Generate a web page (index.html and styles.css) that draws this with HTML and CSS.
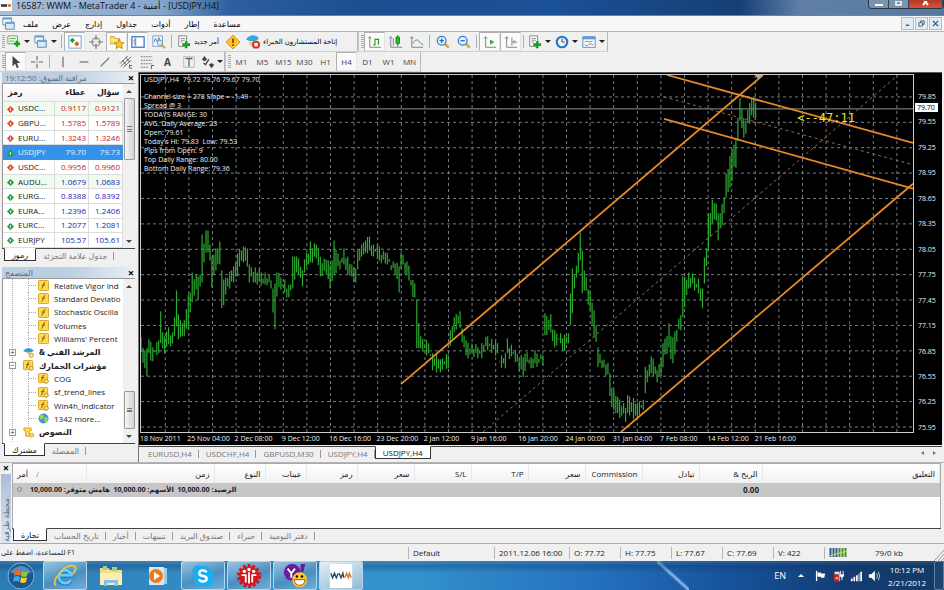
FILE: index.html
```html
<!DOCTYPE html>
<html lang="ar">
<head>
    <meta charset="UTF-8">
    <title>16587: WWM - MetaTrader 4</title>
    <link rel="stylesheet" href="styles.css">
</head>
<body>
<svg class="defs" aria-hidden="true">
    <symbol id="down" viewBox="0 0 8 8"><path d="M4 0L8 4L4 8L0 4Z" fill="#d8431f"/><path d="M4 2v3M2.500 4L4 5.500L5.500 4" stroke="#ffd9c8" fill="none"/></symbol>
    <symbol id="up" viewBox="0 0 8 8"><path d="M4 0L8 4L4 8L0 4Z" fill="#18963a"/><path d="M4 6V3M2.500 4L4 2.500L5.500 4" stroke="#c9f5cf" fill="none"/></symbol>
    <symbol id="func" viewBox="0 0 12 12"><rect x=".5" y=".5" width="11" height="11" rx="1" fill="#ffd94f" stroke="#d5a021"/><path d="M8 3Q6.500 2.200 6 5T4 9.500M4.200 5.500h3.500" stroke="#7a5200" fill="none"/></symbol>
    <symbol id="func2" viewBox="0 0 12 12"><rect x=".5" y=".5" width="10" height="10" rx="1" fill="#ffd94f" stroke="#d5a021"/><path d="M7 2.500Q5.500 2 5 5T3.500 9M3.500 5h3.500" stroke="#7a5200" fill="none"/><circle cx="9" cy="9" r="2.200" fill="#ffe680" stroke="#b98a10"/></symbol>
    <symbol id="hat" viewBox="0 0 12 12"><path d="M0 4Q6-2 12 4Q6 8 0 4Z" fill="#2f9fd0"/><path d="M3 5Q6 10 8 6" fill="#e8b98a"/><circle cx="9" cy="9" r="2.300" fill="#ffe680" stroke="#c79518"/></symbol>
    <symbol id="globe" viewBox="0 0 12 12"><circle cx="6" cy="6" r="5.500" fill="#3b9ad6"/><path d="M2 3Q5 0 6 3T4 7Q1 7 2 3M7 5Q11 3 10.500 7T7 10Z" fill="#9bd84a"/></symbol>
    <symbol id="script" viewBox="0 0 12 12"><path d="M1 1h8v3H7v4h2v2H3V4H1Z" fill="#ffd94f" stroke="#d5a021"/><circle cx="9.500" cy="9" r="2" fill="#ffe680" stroke="#c79518"/></symbol>
    <symbol id="newchart" viewBox="0 0 16 16"><path d="M1 1h11v9H1Z" fill="#eaf7ea" stroke="#6a9a6a"/><path d="M3 4h7M3 7h5" stroke="#58a058"/><path d="M8 10h7M11.500 6.500v7" stroke="#15a31c" stroke-width="3"/></symbol>
    <symbol id="windows" viewBox="0 0 16 16"><path d="M1 1h10v8H1Z" fill="#fff" stroke="#4a82b8"/><path d="M1 2h10" stroke="#6ea6da" stroke-width="2"/><path d="M4 6h10v8H4Z" fill="#dceaf8" stroke="#4a82b8"/><path d="M4 7h10" stroke="#6ea6da" stroke-width="2"/></symbol>
    <symbol id="watch" viewBox="0 0 16 16"><rect x="1" y="1" width="14" height="14" fill="#fff" stroke="#5c9bd0"/><path d="M5 3l3 3l-3 3l-3-3Z" fill="#25a025"/><path d="M10 7l3 3l-3 3l-3-3Z" fill="#d86020"/></symbol>
    <symbol id="cross" viewBox="0 0 16 16"><circle cx="8" cy="8" r="4.500" fill="none" stroke="#777" stroke-width="1.200"/><path d="M8 0v6M8 10v6M0 8h6M10 8h6" stroke="#777" stroke-width="1.200"/></symbol>
    <symbol id="star" viewBox="0 0 16 16"><path d="M0 2h5l1 2h5v6H0Z" fill="#ffe27a" stroke="#c99a18"/><path d="M10.500 5l1.700 3.500l3.800.5l-2.700 2.500l.7 4l-3.500-2l-3.500 2l.7-4L5 9l3.800-.5Z" fill="#ffc820" stroke="#b98510"/></symbol>
    <symbol id="panel" viewBox="0 0 16 16"><rect x="1" y="2" width="14" height="12" fill="#fff" stroke="#3f7fbf" stroke-width="1.500"/><path d="M5 3v10" stroke="#6ea6da" stroke-width="2"/><path d="M3 6h1M3 9h1" stroke="#222"/></symbol>
    <symbol id="tester" viewBox="0 0 16 16"><rect x="1" y="1" width="11" height="12" fill="#eef5fc" stroke="#7f9fbf"/><path d="M2 8l2-4l2 4l2-5l2 5" fill="none" stroke="#5577aa"/><circle cx="9" cy="9" r="3" fill="#d5ebff" stroke="#6b93bb"/><path d="M11 11l4 4" stroke="#d99c34" stroke-width="2"/></symbol>
    <symbol id="order" viewBox="0 0 16 16"><path d="M2 1h9v12H2Z" fill="#fff" stroke="#777"/><path d="M4 4h5M4 6h5M4 8h3" stroke="#888"/><path d="M6 11h9M10.500 7v8" stroke="#15a31c" stroke-width="3"/></symbol>
    <symbol id="warn" viewBox="0 0 16 16"><path d="M8 0l8 8l-8 8l-8-8Z" fill="#ffc529" stroke="#cf8f12"/><path d="M8 4v5M8 10.500v2" stroke="#7a4b00" stroke-width="2"/></symbol>
    <symbol id="expert" viewBox="0 0 16 16"><path d="M0 5Q7-4 15 4Q8 10 0 5Z" fill="#3aa6d8"/><path d="M3 8Q5 14 9 13V8Z" fill="#f0c084"/><circle cx="11.500" cy="11" r="4.500" fill="#d92b1e"/><rect x="9.500" y="9" width="4" height="4" fill="#fff"/></symbol>
    <symbol id="bars" viewBox="0 0 16 16"><path d="M2 2v12h13M0 4l2-2l2 2" fill="none" stroke="#777"/><path d="M8 4v8M6 11h2M8 5h4M12 4v7" fill="none" stroke="#2a9a2a" stroke-width="1.300"/></symbol>
    <symbol id="candle" viewBox="0 0 16 16"><path d="M2 2v12h13M0 4l2-2l2 2M5 4v8" fill="none" stroke="#777"/><path d="M10 0v13" stroke="#157a15"/><rect x="8" y="2" width="4" height="8" rx="1" fill="#2cb92c" stroke="#157a15"/></symbol>
    <symbol id="line" viewBox="0 0 16 16"><path d="M2 2v12h13M0 4l2-2l2 2" fill="none" stroke="#777"/><path d="M3 10Q7 3 10 7T15 11" fill="none" stroke="#3a9a3a"/></symbol>
    <symbol id="zoomin" viewBox="0 0 16 16"><path d="M9.500 9.500l5 5" stroke="#d7a53c" stroke-width="3"/><circle cx="6.500" cy="6.500" r="5" fill="#e4f2ff" stroke="#3a80c8" stroke-width="1.500"/><path d="M4 6.500h5M6.500 4v5" stroke="#2a6fbe" stroke-width="1.500"/></symbol>
    <symbol id="zoomout" viewBox="0 0 16 16"><path d="M9.500 9.500l5 5" stroke="#d7a53c" stroke-width="3"/><circle cx="6.500" cy="6.500" r="5" fill="#e4f2ff" stroke="#3a80c8" stroke-width="1.500"/><path d="M4 6.500h5" stroke="#2a6fbe" stroke-width="1.500"/></symbol>
    <symbol id="scroll" viewBox="0 0 16 16"><path d="M3 2v12h12M1 4l2-2l2 2" fill="none" stroke="#777"/><path d="M8 5l5 3l-5 3Z" fill="#35b035"/></symbol>
    <symbol id="shift" viewBox="0 0 16 16"><path d="M3 2v12h12M1 4l2-2l2 2M9 3v9M15 8h-5M12 6l-2 2l2 2" fill="none" stroke="#777"/></symbol>
    <symbol id="clock" viewBox="0 0 16 16"><circle cx="8" cy="8" r="6" fill="#e6f2ff" stroke="#2f74c0" stroke-width="2.500"/><path d="M8 4v4h3" fill="none" stroke="#333"/></symbol>
    <symbol id="template" viewBox="0 0 16 16"><rect x="1" y="2" width="14" height="12" fill="#fff" stroke="#4a82b8"/><path d="M1 3.500h14" stroke="#5c9bd8" stroke-width="3"/><path d="M3 8l3-1l2 1l4-1M3 11l3 1l3-2l4 1" fill="none" stroke="#777"/></symbol>
    <symbol id="pointer" viewBox="0 0 16 16"><path d="M4 1v12l3-3l2 5l2-1l-2-5h4Z" fill="#444"/></symbol>
    <symbol id="plus" viewBox="0 0 16 16"><path d="M8 1v5M8 10v5M1 8h5M10 8h5M8 7.500v1" stroke="#666" stroke-width="1.200"/></symbol>
    <symbol id="vert" viewBox="0 0 16 16"><path d="M8 2v12" stroke="#666" stroke-width="1.300"/></symbol>
    <symbol id="horz" viewBox="0 0 16 16"><path d="M3 8h10" stroke="#666" stroke-width="1.300"/></symbol>
    <symbol id="diag" viewBox="0 0 16 16"><path d="M3 13L13 3" stroke="#666" stroke-width="1.300"/></symbol>
    <symbol id="channel" viewBox="0 0 16 16"><path d="M1 10L10 1M2 13L14 2M5 14L14 6M4 6l4 5M8 3l4 5M12 12h3M12 15h3M12 11v4" stroke="#555"/></symbol>
    <symbol id="fibo" viewBox="0 0 16 16"><path d="M1 2h13M1 6h13M1 10h13M1 14h9" stroke="#666" stroke-dasharray="2 1"/><path d="M13 16v-4h3" fill="none" stroke="#444"/></symbol>
    <symbol id="label" viewBox="0 0 16 16"><rect x="2" y="2" width="12" height="12" fill="none" stroke="#777" stroke-dasharray="1 1"/><path d="M4 4h8M8 4v9" stroke="#666" stroke-width="1.500"/></symbol>
    <symbol id="arrows" viewBox="0 0 16 16"><path d="M1 5l3-4l3 4l-3 2ZM9 11l3-2l3 2l-3 4Z" fill="#444"/><path d="M3 9l2 2l4-6" fill="none" stroke="#444" stroke-width="1.500"/></symbol>
</svg>

<header class="titlebar">
    <svg class="logo" viewBox="0 0 12 11"><path fill="#fff" d="M0 0h12v11H0Z"/><path d="M1 4l1 3l1-3l1 3l1-3l1 3l1-3" fill="none" stroke="#333"/><path d="M8 7l1-3l1 3l1-3" fill="none" stroke="#e07020"/></svg>
    <h1>16587: WWM - MetaTrader 4 - أمنية - [USDJPY,H4]</h1>
    <div class="winbtns">
        <button aria-label="minimize"><svg viewBox="0 0 8 6"><path d="M0 3h8v2H0Z" fill="#fff"/></svg></button>
        <button aria-label="maximize"><svg viewBox="0 0 8 6"><path d="M1 0h5v4H1Z" fill="none" stroke="#fff" stroke-width="1.500"/></svg></button>
        <button class="close" aria-label="close"><svg viewBox="0 0 8 6"><path d="M1-2l5 6M6-2L1 4" stroke="#fff" stroke-width="2"/></svg></button>
    </div>
</header>

<nav class="menubar">
    <svg class="ic" viewBox="0 0 16 16"><use href="#windows"/></svg>
    <button>ملف</button>
    <button>عرض</button>
    <button>إدارج</button>
    <button>جداول</button>
    <button>أدوات</button>
    <button>إطار</button>
    <button>مساعدة</button>
    <div class="mdibtns">
        <button aria-label="minimize child"><svg viewBox="0 0 8 8"><path d="M2 6h4" stroke="#456" stroke-width="1.500"/></svg></button>
        <button aria-label="restore child"><svg viewBox="0 0 8 8"><path d="M1 3h4v4H1ZM3 3V1h4v4H5" fill="none" stroke="#456"/></svg></button>
        <button aria-label="close child"><svg viewBox="0 0 8 8"><path d="M1 1l6 6M7 1L1 7" stroke="#456" stroke-width="1.500"/></svg></button>
    </div>
</nav>

<div class="toolbar">
    <div class="group">
        <i class="grip"></i>
        <button class="drop" aria-label="new chart"><svg class="ic"><use href="#newchart"/></svg></button>
        <button class="drop" aria-label="profiles"><svg class="ic"><use href="#windows"/></svg></button>
        <i class="sep"></i>
        <button class="on" aria-label="market watch"><svg class="ic"><use href="#watch"/></svg></button>
        <button aria-label="data window"><svg class="ic"><use href="#cross"/></svg></button>
        <button class="on" aria-label="navigator"><svg class="ic"><use href="#star"/></svg></button>
        <button class="on" aria-label="terminal"><svg class="ic"><use href="#panel"/></svg></button>
        <button aria-label="tester"><svg class="ic"><use href="#tester"/></svg></button>
        <i class="sep"></i>
        <button class="text"><svg class="ic"><use href="#order"/></svg>أمر جديد</button>
        <button aria-label="metaeditor"><svg class="ic"><use href="#warn"/></svg></button>
        <button class="text experts"><svg class="ic"><use href="#expert"/></svg>إتاحة المستشارون الخبراء</button>
    </div>
    <div class="group">
        <i class="grip"></i>
        <button class="on" aria-label="bar chart"><svg class="ic"><use href="#bars"/></svg></button>
        <button aria-label="candlesticks"><svg class="ic"><use href="#candle"/></svg></button>
        <button aria-label="line chart"><svg class="ic"><use href="#line"/></svg></button>
        <i class="sep"></i>
        <button aria-label="zoom in"><svg class="ic"><use href="#zoomin"/></svg></button>
        <button aria-label="zoom out"><svg class="ic"><use href="#zoomout"/></svg></button>
        <i class="sep"></i>
        <button class="on" aria-label="auto scroll"><svg class="ic"><use href="#scroll"/></svg></button>
        <button class="on" aria-label="chart shift"><svg class="ic"><use href="#shift"/></svg></button>
        <i class="sep"></i>
        <button class="drop" aria-label="indicators"><svg class="ic"><use href="#order"/></svg></button>
        <button class="drop" aria-label="periods"><svg class="ic"><use href="#clock"/></svg></button>
        <button class="drop" aria-label="templates"><svg class="ic"><use href="#template"/></svg></button>
    </div>
</div>

<div class="toolbar tools">
    <div class="group">
        <i class="grip"></i>
        <button class="on" aria-label="cursor"><svg class="ic"><use href="#pointer"/></svg></button>
        <button aria-label="crosshair"><svg class="ic"><use href="#plus"/></svg></button>
        <i class="sep"></i>
        <button aria-label="vertical line"><svg class="ic"><use href="#vert"/></svg></button>
        <button aria-label="horizontal line"><svg class="ic"><use href="#horz"/></svg></button>
        <button aria-label="trendline"><svg class="ic"><use href="#diag"/></svg></button>
        <button aria-label="channel"><svg class="ic"><use href="#channel"/></svg></button>
        <button aria-label="fibonacci"><svg class="ic"><use href="#fibo"/></svg></button>
        <button class="letter">A</button>
        <button aria-label="text label"><svg class="ic"><use href="#label"/></svg></button>
        <button class="drop" aria-label="arrows"><svg class="ic"><use href="#arrows"/></svg></button>
    </div>
    <div class="group">
        <i class="grip"></i>
        <button>M1</button>
        <button>M5</button>
        <button>M15</button>
        <button>M30</button>
        <button>H1</button>
        <button class="on">H4</button>
        <button>D1</button>
        <button>W1</button>
        <button>MN</button>
    </div>
</div>

<main class="main">
    <aside class="side">
        <section class="panel">
            <div class="ptitle"><h2>مراقبة السوق: 19:12:50</h2><button aria-label="close">×</button></div>
            <div class="pbody">
                <table class="watch">
                    <thead>
                        <tr><th class="sym">رمز</th><th>عطاء</th><th>سؤال</th></tr>
                    </thead>
                    <tbody>
                        <tr class="red alt"><td><svg><use href="#down"/></svg>USDC...</td><td>0.9117</td><td>0.9121</td></tr>
                        <tr class="red"><td><svg><use href="#down"/></svg>GBPU...</td><td>1.5785</td><td>1.5789</td></tr>
                        <tr class="red"><td><svg><use href="#down"/></svg>EURU...</td><td>1.3243</td><td>1.3246</td></tr>
                        <tr class="sel"><td><svg><use href="#up"/></svg>USDJPY</td><td>79.70</td><td>79.73</td></tr>
                        <tr class="red"><td><svg><use href="#down"/></svg>USDC...</td><td>0.9956</td><td>0.9960</td></tr>
                        <tr class="alt"><td><svg><use href="#up"/></svg>AUDU...</td><td>1.0679</td><td>1.0683</td></tr>
                        <tr><td><svg><use href="#up"/></svg>EURG...</td><td>0.8388</td><td>0.8392</td></tr>
                        <tr><td><svg><use href="#up"/></svg>EURA...</td><td>1.2396</td><td>1.2406</td></tr>
                        <tr><td><svg><use href="#up"/></svg>EURC...</td><td>1.2077</td><td>1.2081</td></tr>
                        <tr><td><svg><use href="#up"/></svg>EURJPY</td><td>105.57</td><td>105.61</td></tr>
                    </tbody>
                </table>
                <div class="scroll"><i class="thumb"></i></div>
            </div>
            <div class="tabs"><button class="active">رموز</button><button>جدول علامة التجزئة</button></div>
        </section>
        <section class="panel">
            <div class="ptitle"><h2>المتصفح</h2><button aria-label="close">×</button></div>
            <div class="pbody">
                <ul class="tree">
                    <li class="leaf"><svg><use href="#func"/></svg>Relative Vigor Ind</li>
                    <li class="leaf"><svg><use href="#func"/></svg>Standard Deviatio</li>
                    <li class="leaf"><svg><use href="#func"/></svg>Stochastic Oscilla</li>
                    <li class="leaf"><svg><use href="#func"/></svg>Volumes</li>
                    <li class="leaf end"><svg><use href="#func"/></svg>Williams' Percent</li>
                    <li class="node"><i>+</i><svg><use href="#hat"/></svg>&amp; المرشد الفني</li>
                    <li class="node"><i>−</i><svg><use href="#func2"/></svg>مؤشرات الجمارك</li>
                    <li class="leaf"><svg><use href="#func2"/></svg>COG</li>
                    <li class="leaf"><svg><use href="#func2"/></svg>sf_trend_lines</li>
                    <li class="leaf"><svg><use href="#func2"/></svg>Win4h_Indicator</li>
                    <li class="leaf end"><svg><use href="#globe"/></svg>1342 more...</li>
                    <li class="node"><i>+</i><svg><use href="#script"/></svg>النصوص</li>
                </ul>
                <div class="scroll low"><i class="thumb"></i></div>
            </div>
            <div class="tabs"><button class="active">مشترك</button><button>المفضلة</button></div>
        </section>
    </aside>

    <section class="work">
        <div class="chart">
            <div class="plot">
                <svg id="plot" viewBox="0 0 772 358" preserveAspectRatio="none">
                    <g id="grid"></g>
                    <path class="now" d="M0 34H772"/>
                    <path id="bars-h4"/>
                    <path class="mid" d="M342 358L757 0M523 22L772 90"/>
                    <path class="trend" d="M260 310L622 0M480 358L772 109M526 0L772 68M523 44L772 114"/>
                    <path class="mark" d="M614 0h8l-5 4Z"/>
                </svg>
                <div class="info">
                    <p class="head">USDJPY,H4&nbsp; 79.72 79.76 79.67 79.70</p>
                    <p>Channel size = 278 Slope = -1.49</p>
                    <p>Spread @ 3</p>
                    <p>TODAYS RANGE: 30</p>
                    <p>AVG. Daily Average: 23</p>
                    <p>Open: 79.61</p>
                    <p>Today's Hi: 79.83&nbsp; Low: 79.53</p>
                    <p>Pips from Open: 9</p>
                    <p>Top Daily Range: 80.00</p>
                    <p>Bottom Daily Range: 79.36</p>
                </div>
                <div class="countdown">&lt;--47:11</div>
            </div>
            <div class="prices">
                <span>79.85</span><span>79.55</span><span>79.25</span><span>78.95</span><span>78.65</span><span>78.35</span><span>78.05</span>
                <span>77.75</span><span>77.45</span><span>77.15</span><span>76.85</span><span>76.55</span><span>76.25</span><span>75.95</span>
                <b>79.70</b>
            </div>
            <div class="times">
                <span>18 Nov 2011</span><span>25 Nov 04:00</span><span>2 Dec 08:00</span><span>9 Dec 12:00</span><span>16 Dec 16:00</span>
                <span>23 Dec 20:00</span><span>2 Jan 12:00</span><span>9 Jan 16:00</span><span>16 Jan 20:00</span><span>24 Jan 00:00</span>
                <span>31 Jan 04:00</span><span>7 Feb 08:00</span><span>14 Feb 12:00</span><span>21 Feb 16:00</span>
            </div>
        </div>
        <div class="tabs charttabs">
            <button>EURUSD,H4</button><button>USDCHF,H4</button><button>GBPUSD,M30</button><button>USDJPY,H4</button><button class="active">USDJPY,H4</button>
            <div class="pager"><i class="prev"></i><i class="next"></i></div>
        </div>
    </section>
</main>

<section class="terminal">
    <div class="tside"><button aria-label="close">×</button><h2>محطة طرفية</h2></div>
    <div class="tbody">
        <div class="tarea">
            <table class="orders">
                <colgroup><col class="c1"><col class="c2"><col class="c3"><col class="c4"><col class="c3"><col class="c5"><col class="c5"><col class="c5"><col class="c5"><col class="c5"><col class="c5"><col class="c6"><col></colgroup>
                <thead>
                    <tr><th class="first">أمر<span>/</span></th><th>زمن</th><th>النوع</th><th>عينات</th><th>رمز</th><th>سعر</th><th>S/L</th><th>T/P</th><th>سعر</th><th>Commission</th><th>تبادل</th><th>&amp; الربح</th><th>التعليق</th></tr>
                </thead>
                <tbody>
                    <tr><td colspan="11" class="balance"><i></i><span dir="rtl">الرصيد: 10,000.00&nbsp; الأسهم: 10,000.00&nbsp; هامش متوفر: 10,000.00</span></td><td>0.00</td><td></td></tr>
                </tbody>
            </table>
        </div>
        <div class="tabs">
            <button class="active">تجارة</button><button>تاريخ الحساب</button><button>أخبار</button><button>تنبيهات</button><button>صندوق البريد</button><button>خبراء</button><button>دفتر اليومية</button>
        </div>
    </div>
</section>

<footer class="status">
    <span class="help">للمساعدة، اضغط على F1</span>
    <span class="s1">Default</span>
    <span class="s2">2011.12.06 16:00</span>
    <span class="s3">O: 77.72</span>
    <span class="s3">H: 77.75</span>
    <span class="s3">L: 77.67</span>
    <span class="s3">C: 77.69</span>
    <span class="s3">V: 422</span>
    <span class="s4"><svg viewBox="0 0 18 9"><path d="M1.500 0v9M4.500 0v9M7.500 0v9" stroke="#2a5a8a" stroke-width="2"/><path d="M10.500 0v9M13.500 0v9M16.500 0v9" stroke="#4a8a2a" stroke-width="2"/><path d="M0 8L18 3" stroke="#c8dc50"/></svg>79/0 kb</span>
    <svg class="resize" viewBox="0 0 10 12"><path d="M0 12L10 1M4 12L10 5M7 12L10 9" stroke="#999"/></svg>
</footer>

<nav class="taskbar">
    <button class="start" aria-label="start"><svg viewBox="0 0 28 28"><circle cx="14" cy="14" r="13" fill="#1c568c" stroke="#7db4dc"/><path d="M3 10Q14-2 25 10Q14 15 3 10Z" fill="#79b2d8" opacity=".6"/><path d="M8 9q3-2 6 0l-1 5q-3-2-6 0Z" fill="#f26522"/><path d="M15 9q3 2 6 0l-1 5q-3 2-6 0Z" fill="#8cc63f"/><path d="M7 15q3-2 6 0l-1 5q-3-2-6 0Z" fill="#35a8e8"/><path d="M14 15q3 2 6 0l-1 5q-3 2-6 0Z" fill="#ffcb1f"/></svg></button>
    <button class="open" aria-label="internet explorer"><svg viewBox="0 0 28 28"><path d="M20 19A7 7 0 1 1 21 13.500H8" fill="none" stroke="#1b7fd0" stroke-width="5"/><path d="M20 18.500A7 7 0 1 1 21 13H8" fill="none" stroke="#6accf8" stroke-width="3"/><path d="M4 24Q0 20 9 10T25 4Q27 7 22 12" fill="none" stroke="#f0c435" stroke-width="2"/></svg></button>
    <button aria-label="explorer"><svg viewBox="0 0 28 28"><path d="M3 6h8l2 2h12v15H3Z" fill="#f3dc86"/><path d="M3 11h22v12H3Z" fill="#fbeeb0"/><path d="M6 4h4v4H6ZM15 5h5v4h-5Z" fill="#9ed08c"/><path d="M7 24v-6h14v6h-3v-3h-8v3Z" fill="#7cc4ec"/></svg></button>
    <button aria-label="media player"><svg viewBox="0 0 28 28"><rect x="9" y="6" width="15" height="16" fill="#9ecbe8"/><rect x="6" y="5" width="15" height="18" fill="#d5e9f6"/><circle cx="13" cy="14" r="7" fill="#f07a1c"/><path d="M11 10l6 4l-6 4Z" fill="#fff"/></svg></button>
    <button class="open" aria-label="skype"><svg viewBox="0 0 28 28"><circle cx="14" cy="14" r="11" fill="#18aef0"/><circle cx="9" cy="9" r="6.500" fill="#18aef0"/><circle cx="19" cy="19" r="6.500" fill="#18aef0"/><path d="M18 10Q16 7.500 13 8Q10 8.500 10 11T14 14T18 17T14 20Q11 20 9.500 17.500" fill="none" stroke="#fff" stroke-width="2.600"/></svg></button>
    <button class="open" aria-label="gear"><svg viewBox="0 0 28 28"><circle cx="14" cy="14" r="11" fill="none" stroke="#d3161c" stroke-width="4" stroke-dasharray="3 2"/><circle cx="14" cy="14" r="10.500" fill="#d3161c"/><circle cx="9" cy="9" r="1.800" fill="#fff"/><circle cx="14" cy="7" r="1.800" fill="#fff"/><circle cx="19" cy="9" r="1.800" fill="#fff"/><path d="M6 13h4.500v8M22 13h-4.500v8M14 10v12" fill="none" stroke="#fff" stroke-width="2"/></svg></button>
    <button class="open" aria-label="messenger"><svg viewBox="0 0 28 28"><circle cx="11" cy="10" r="9" fill="#6a1c9a"/><path d="M20 1l5 0l-2 9h-3Z" fill="#6a1c9a"/><path d="M6 6l4 5l4-5M10 11v5" fill="none" stroke="#fff" stroke-width="2"/><circle cx="19" cy="18" r="8" fill="#fcc82a"/><path d="M13 18h12q-1 6-6 6t-6-6" fill="#fff" stroke="#a04a10"/><circle cx="16" cy="14.500" r="1.300"/><circle cx="21.500" cy="14.500" r="1.300"/></svg></button>
    <button class="open current" aria-label="metatrader"><svg viewBox="0 0 28 28"><path d="M2 1h24v26H2Z" fill="#fff"/><path d="M3 11l2 5l2-5l2 5l2-5M12 11l2 5l2-5l1 5" fill="none" stroke="#2a5068" stroke-width="1.500"/><path d="M18 16l2-5l2 5l1-5l2 5" fill="none" stroke="#e07828" stroke-width="1.500"/></svg></button>
    <div class="tray">
        <span class="lang">EN</span>
        <i class="more"></i>
        <svg viewBox="0 0 14 14"><path d="M3 1v12" stroke="#fff" stroke-width="1.500"/><path d="M4 3h4v1h5l-1 5H8V8H4Z" fill="#fff"/></svg>
        <svg viewBox="0 0 14 14"><path d="M3 2h6v11H3Z" fill="#ddd"/><path d="M2 5h6v8H2Z" fill="#c41a14"/><path d="M4 8l3 3M7 8l-3 3" stroke="#fff"/><path d="M10 1v4M13 1v4" stroke="#fff"/><path d="M9 5h5v2l-2 2v3h-1V9L9 7Z" fill="#fff"/></svg>
        <svg viewBox="0 0 14 14"><path d="M1 13v-3h2v3ZM4 13V8h2v5ZM7 13V6h2v7ZM10 13V4h1v9ZM12 13V2h2v11Z" fill="#fff"/></svg>
        <svg viewBox="0 0 14 14"><path d="M1 5h3l4-4v12L4 9H1Z" fill="#fff"/><path d="M10 4q2 3 0 6M12 2q3 5 0 10" fill="none" stroke="#cde"/></svg>
        <div class="time">10:12 PM<br>2/21/2012</div>
        <button class="desk" aria-label="show desktop"></button>
    </div>
</nav>
<script src="chart.js"></script>
</body>
</html>
```

FILE: styles.css
```css
*{
    margin: 0;
    padding: 0;
    box-sizing: border-box;
}
html,body{
    height: 100%;
}
body{
    display: flex;
    flex-direction: column;
    overflow: hidden;
    background: #f0f0f0;
    color: #222;
    font: 8px/10px "Open Sans","DejaVu Sans",sans-serif;
}
button{
    border: 0;
    background: none;
    color: inherit;
    font: inherit;
    white-space: nowrap;
}
h1,h2{
    font: inherit;
    white-space: nowrap;
}
ul{
    list-style: none;
}
table{
    border-collapse: collapse;
    table-layout: fixed;
}
.defs{
    display: none;
}
.ic{
    width: 14px;
    height: 14px;
    flex: none;
}

/* title and menu */
.titlebar{
    flex: 0 0 16px;
    display: flex;
    align-items: flex-start;
    overflow: hidden;
    border-bottom: 1px solid #6f8195;
    background: radial-gradient(ellipse at 468px 10px,#c8e0ea 0,transparent 16px),
        radial-gradient(ellipse at 360px 16px,#9a5a7a 0,transparent 16px),
        linear-gradient(90deg,#a9c0da,#86a6cc 160px,#2d5f9e 230px,#1c4f90 360px,#1a5096 560px,#163f74 740px,#5f7fa6 800px,#56789f);
}
.logo{
    width: 12px;
    height: 11px;
}
.titlebar h1{
    margin-left: 4px;
    font-size: 9px;
    line-height: 11px;
    color: #111;
}
.winbtns{
    display: flex;
    margin-left: auto;
    border: 1px solid #27384d;
    border-top: 0;
    border-radius: 0 0 4px 4px;
    overflow: hidden;
}
.winbtns button{
    width: 20px;
    height: 8px;
    background: #7d93ad;
    border-right: 1px solid #33455c;
}
.winbtns .close{
    width: 34px;
    background: linear-gradient(#b03a2a,#d9502f);
}
.winbtns svg{
    display: block;
    width: 8px;
    height: 6px;
    margin: 0 auto;
}
.menubar{
    flex: 0 0 16px;
    display: flex;
    align-items: center;
    padding-left: 2px;
    background: #f7f7f7;
    border-bottom: 1px solid #b4b4b4;
    color: #000;
}
.menubar > button{
    padding: 0 7px;
}
.mdibtns{
    display: flex;
    gap: 1px;
    margin-left: auto;
    margin-right: 2px;
}
.mdibtns button{
    width: 13px;
    height: 13px;
    border: 1px solid #a9c0da;
    background: #e3edf8;
}
.mdibtns svg{
    display: block;
    width: 7px;
    height: 7px;
    margin: 0 auto;
}

/* toolbars */
.toolbar{
    flex: 0 0 20px;
    display: flex;
}
.group{
    display: flex;
    align-items: stretch;
    padding-left: 2px;
    border-right: 1px solid #b8b8b8;
    border-bottom: 1px solid #d0d0d0;
}
.group + .group{
    border-left: 1px solid #c8c8c8;
}
.grip{
    width: 3px;
    margin: 3px 0;
    background: repeating-linear-gradient(#aaa 0 1px,#f0f0f0 1px 2px);
}
.sep{
    width: 1px;
    margin: 3px 2px;
    background: #b0b0b0;
}
.group button{
    display: flex;
    align-items: center;
    justify-content: center;
    width: 21px;
    border: 1px solid transparent;
    color: #444;
}
.group .on{
    background: #fafafa;
    border-color: #b0b0b0 #e4e4e4 #e4e4e4 #b0b0b0;
}
.group .drop{
    width: 27px;
    gap: 3px;
}
.tools .drop{
    width: 25px;
    gap: 2px;
}
.drop:after{
    content: "";
    border: 3px solid transparent;
    border-top-color: #222;
    border-bottom: 0;
}
.group .text{
    justify-content: flex-start;
    width: 48px;
    gap: 3px;
    padding: 0 2px;
    color: #000;
    font-size: 7px;
}
.group .experts{
    width: 114px;
}
.group .letter{
    font-size: 10px;
    font-weight: bold;
}

/* left panels */
.main{
    flex: 1;
    min-height: 0;
    display: flex;
}
.side{
    flex: 0 0 138px;
    display: flex;
    flex-direction: column;
    gap: 4px;
    padding: 0 3px 4px 2px;
}
.panel{
    flex: 1;
    min-height: 0;
    display: flex;
    flex-direction: column;
}
.ptitle{
    flex: 0 0 11px;
    display: flex;
    justify-content: space-between;
    align-items: center;
    background: linear-gradient(90deg,#bccee2 50%,#dfe8f2 90%,#f0f0f0);
}
.ptitle h2{
    padding-left: 3px;
    color: #5d6b7a;
}
.ptitle button,
.tside button{
    width: 8px;
    line-height: 10px;
    font-size: 11px;
    font-weight: bold;
    color: #000;
}
.pbody{
    flex: 1;
    min-height: 0;
    display: flex;
    background: #fff;
    border: 1px solid #999;
    border-width: 1px 0 0 1px;
}
.watch{
    flex: 1;
    width: 0;
    height: 100%;
}
.watch th{
    width: 34px;
    height: 17px;
    padding-right: 3px;
    text-align: right;
    background: linear-gradient(#fff,#f3f3f3);
}
.watch .sym{
    width: auto;
    padding-left: 5px;
    text-align: left;
}
.watch td{
    border: 1px solid #dcdcdc;
    border-left: 0;
    padding-right: 2px;
    text-align: right;
    color: #1a1ab8;
    white-space: nowrap;
    overflow: hidden;
}
.watch td:first-child{
    text-align: left;
    color: #222;
    padding-left: 4px;
}
.watch svg{
    width: 7px;
    height: 7px;
    margin-right: 4px;
    vertical-align: middle;
}
.watch .red td + td{
    color: #c41a1a;
}
.watch .alt{
    background: #f0fbf0;
}
.watch .sel td,
.watch .sel td:first-child{
    background: #3592ea;
    border-color: #3592ea;
    color: #e4f2ff;
}
.scroll{
    flex: 0 0 12px;
    display: flex;
    flex-direction: column;
    align-items: center;
    background: #f0f0f0;
}
.scroll:before,
.scroll:after{
    content: "";
    margin: 6px 0 5px;
    border: 3px solid transparent;
    border-top: 0;
    border-bottom-color: #444;
}
.scroll:after{
    margin: auto 0 5px;
    border-top: 3px solid #444;
    border-bottom: 0;
}
.thumb{
    width: 11px;
    height: 62px;
    border: 1px solid #999;
    border-radius: 1px;
    background: linear-gradient(#777,#777) center 45%/5px 1px no-repeat,
        linear-gradient(#777,#777) center 50%/5px 1px no-repeat,
        linear-gradient(#777,#777) center 55%/5px 1px no-repeat,
        linear-gradient(90deg,#f6f6f6,#d3d3d3);
}
.low .thumb{
    height: 38px;
    margin-top: auto;
}
.low:after{
    margin-top: 6px;
}
.tree{
    flex: 1;
    width: 0;
    display: grid;
    grid-auto-rows: 1fr;
    padding-bottom: 4px;
    background: repeating-linear-gradient(#aaa 0 1px,#fff 1px 2px) 9px 0/1px 100% no-repeat;
}
.tree li{
    display: flex;
    align-items: center;
    white-space: nowrap;
}
.tree svg{
    flex: none;
    width: 11px;
    height: 11px;
    margin-right: 5px;
}
.leaf{
    margin-left: 25px;
    border-left: 1px dotted #aaa;
}
.leaf:before{
    content: "";
    width: 7px;
    margin-right: 2px;
    border-top: 1px dotted #aaa;
}
.node{
    padding-left: 6px;
    font-weight: bold;
}
.node i{
    width: 7px;
    height: 7px;
    margin-right: 7px;
    border: 1px solid #999;
    background: #fff;
    font: 7px/5px "Open Sans",sans-serif;
    text-align: center;
}

/* tabs under every panel */
.tabs{
    flex: 0 0 15px;
    display: flex;
    align-items: flex-start;
    padding-left: 2px;
    border-top: 1px solid #444;
    color: #777;
}
.tabs button{
    height: 13px;
    padding: 0 7px;
    background: linear-gradient(#999,#999) right center/1px 8px no-repeat;
}
.tabs .active{
    margin-top: -1px;
    background: #fff;
    border: 1px solid #333;
    border-top-color: #fff;
    color: #111;
}

/* chart window */
.work{
    flex: 1;
    min-width: 0;
    display: flex;
    flex-direction: column;
    border-left: 1px solid #777;
    padding-right: 2px;
}
.chart{
    flex: 1;
    min-height: 0;
    display: grid;
    grid-template-columns: 1fr 28px;
    grid-template-rows: 1fr 12px;
    padding: 1px 0 0 1px;
    border-top: 1px solid #555;
    border-bottom: 1px solid #eee;
    background: #000;
    color: #eee;
    font-size: 7px;
}
.plot{
    position: relative;
    min-height: 0;
    border: 1px solid #ccc;
}
.plot > svg{
    position: absolute;
    width: 100%;
    height: 100%;
}
.plot path{
    fill: none;
    vector-effect: non-scaling-stroke;
}
#grid path{
    stroke: #747d88;
    stroke-dasharray: 3 3;
}
#bars-h4{
    stroke: #2cab30;
    stroke-width: 1.200;
}
.plot .now{
    stroke: #8a949e;
}
.plot .trend{
    stroke: #e88a28;
    stroke-width: 1.800;
}
.plot .mid{
    stroke: #96694a;
    stroke-dasharray: 3 3;
}
.plot .mark{
    fill: #aaa;
}
.info{
    position: absolute;
    left: 3px;
    top: 0;
    line-height: 9px;
    white-space: nowrap;
}
.info .head{
    margin-bottom: 8px;
}
.countdown{
    position: absolute;
    left: 85%;
    top: 10%;
    color: #e6e619;
    font: 12px/14px "DejaVu Sans Mono",monospace;
}
.prices{
    position: relative;
    display: flex;
    flex-direction: column;
    justify-content: space-between;
    padding-top: 18px;
    padding-left: 4px;
}
.prices b{
    position: absolute;
    left: 1px;
    top: 8%;
    padding: 0 3px 0 2px;
    line-height: 9px;
    background: #fff;
    color: #000;
    font-weight: normal;
}
.times{
    grid-column: 1 / 3;
    display: flex;
    padding-right: 28px;
}
.times span{
    flex: 0 0 6.110%;
    line-height: 12px;
    white-space: nowrap;
}
.charttabs{
    flex-basis: 16px;
    border-top: 1px solid #444;
}
.pager{
    display: flex;
    gap: 9px;
    margin: 4px 3px 0 auto;
}
.pager i{
    border: 3px solid transparent;
    border-width: 2px 3px;
}
.pager .prev{
    border-right-color: #777;
}
.pager .next{
    border-left-color: #777;
}

/* terminal */
.terminal{
    flex: 0 0 82px;
    display: flex;
    padding-right: 3px;
    border-top: 1px solid #b5b5b5;
    border-bottom: 1px solid #aaa;
}
.tside{
    flex: 0 0 12px;
    display: flex;
    flex-direction: column;
    align-items: center;
    gap: 1px;
}
.tside h2{
    flex: 1;
    width: 10px;
    padding-top: 1px;
    background: linear-gradient(#dbe6f2,#a9bfd8);
    writing-mode: vertical-rl;
    transform: rotate(180deg);
    color: #5d6b7a;
}
.tbody{
    flex: 1;
    min-width: 0;
    display: flex;
    flex-direction: column;
}
.tarea{
    flex: 1;
    background: #fff;
    border: 1px solid #aaa;
    border-bottom: 0;
}
.tbody .tabs{
    padding-left: 1px;
}
.orders{
    width: 100%;
}
.orders .c1{ width: 73px; }
.orders .c2{ width: 128px; }
.orders .c3{ width: 51px; }
.orders .c4{ width: 41px; }
.orders .c5{ width: 57px; }
.orders .c6{ width: 63px; }
.orders th{
    height: 19px;
    padding-right: 4px;
    border-right: 1px solid #e8e8e8;
    background: linear-gradient(#fff,#f1f1f1);
    text-align: right;
    font-weight: normal;
}
.orders .first{
    padding-left: 4px;
    text-align: left;
}
.first span{
    margin-left: 8px;
    color: #888;
}
.orders td{
    height: 14px;
    padding-right: 3px;
    background: #c6c6c6;
    text-align: right;
    font-weight: bold;
}
.orders .balance{
    padding-left: 4px;
    text-align: left;
    font-size: 7px;
}
.balance i{
    display: inline-block;
    width: 5px;
    height: 5px;
    margin-right: 8px;
    border: 1px solid #888;
    border-radius: 50%;
}

/* status bar */
.status{
    flex: 0 0 17px;
    display: flex;
    align-items: center;
    line-height: 12px;
    white-space: nowrap;
}
.status span + span{
    padding-left: 4px;
    border-left: 1px solid #b5b5b5;
}
.help{
    flex: 1;
    padding-left: 1px;
    font-size: 7px;
}
.s1{ width: 86px; }
.s2{ width: 75px; }
.s3{ width: 51px; }
.s4{
    width: 110px;
    display: flex;
    align-items: center;
    gap: 28px;
}
.s4 svg{
    width: 18px;
    height: 9px;
}
.resize{
    align-self: flex-end;
    width: 10px;
    height: 12px;
}

/* taskbar */
.taskbar{
    flex: 0 0 29px;
    display: flex;
    align-items: stretch;
    gap: 2px;
    background: linear-gradient(#5a7ea455,#0a336055 5px,transparent 12px),
        linear-gradient(to top right,transparent 44%,#8ec0ea 50%,transparent 56%) 72% 0/32px 29px no-repeat,
        linear-gradient(90deg,#2a7db4,#3a93cc 300px,#3290cc 420px,#2470be 600px,#17549e 720px,#123c72 850px,#153a66);
    font-size: 9px;
}
.taskbar button{
    width: 44px;
    border-radius: 2px;
}
.taskbar .start{
    width: 41px;
}
.taskbar button svg{
    display: block;
    width: 28px;
    height: 28px;
    margin: 0 auto;
}
.taskbar .open{
    border: 1px solid #b5d6ec;
    background: linear-gradient(160deg,#9cc4de,#4a8fc0 55%,#6fb0da);
}
.taskbar .open svg{
    width: 26px;
    height: 26px;
}
.taskbar .current{
    background: linear-gradient(160deg,#e0eef6,#8fbad6);
}
.tray{
    display: flex;
    align-items: center;
    gap: 6px;
    margin-left: auto;
    color: #fff;
}
.tray > svg{
    width: 12px;
    height: 12px;
}
.lang{
    margin-right: 6px;
}
.more{
    margin-right: 4px;
    border: 3px solid transparent;
    border-top: 0;
    border-bottom-color: #fff;
}
.time{
    padding: 0 2px;
    font-size: 8px;
    line-height: 13px;
    text-align: center;
}
.tray .desk{
    align-self: stretch;
    width: 10px;
    border: 1px solid #5f7f9f;
    background: #1d4470;
}
```

FILE: chart.js
```js
var NS="http://www.w3.org/2000/svg";
var grid=document.getElementById("grid");
var d="";
for(var i=0;i<32;i++){
    d+="M"+(24.3+i*23.6)+" 0V358";
}
for(var j=0;j<14;j++){
    d+="M0 "+(22+j*25.46)+"H772";
}
var lines=document.createElementNS(NS,"path");
lines.setAttribute("d",d);
grid.appendChild(lines);

// x, high, low
var pts=[
    [0,263,278],[3,276,294],[5,274,302],[7,265,279],[12,273,287],[17,266,279],[20,237,269],[22,258,274],
    [24,262,279],[27,253,270],[30,261,272],[32,258,269],[35,216,252],[37,240,265],[39,246,263],[41,249,262],
    [44,246,262],[47,220,255],[49,218,238],[52,198,228],[55,200,215],[57,202,226],[60,200,212],[62,160,208],
    [64,169,188],[66,156,178],[68,170,186],[70,182,213],[72,180,200],[75,174,196],[78,167,190],[79,178,241],
    [82,205,231],[85,203,220],[88,197,214],[92,192,208],[95,188,202],[97,179,202],[99,175,192],[103,172,188],
    [107,174,192],[109,190,208],[115,193,208],[120,198,211],[125,198,210],[130,206,214],[133,209,255],[136,198,222],
    [140,203,215],[144,205,218],[146,214,223],[150,210,216],[152,182,214],[155,182,198],[158,184,200],[161,196,212],
    [165,178,192],[168,179,190],[170,167,188],[175,170,184],[180,182,202],[185,185,200],[189,190,214],[194,166,200],
    [198,186,195],[202,174,190],[206,182,200],[210,190,202],[214,194,208],[217,175,195],[220,170,182],[225,166,178],
    [229,162,176],[233,170,182],[238,172,186],[244,178,189],[254,189,200],[259,192,218],[261,178,194],[267,191,206],
    [273,209,223],[276,225,274],[279,262,274],[287,269,279],[292,279,296],[300,285,298],[307,281,294],[310,256,272],
    [314,243,258],[319,237,254],[322,254,268],[326,266,281],[337,273,284],[347,262,276],[356,269,279],[357,283,293],
    [364,279,294],[366,264,279],[374,276,288],[383,283,303],[387,278,288],[391,283,294],[394,276,289],[401,281,291],
    [403,239,261],[409,240,258],[413,256,273],[419,259,269],[422,264,276],[427,259,269],[431,194,239],[434,201,214],
    [439,158,186],[441,176,219],[444,196,216],[449,216,236],[454,236,263],[457,273,293],[461,286,294],[466,289,300],
    [467,289,323],[472,316,336],[477,323,339],[485,334,348],[487,321,339],[496,329,344],[502,326,336],[503,288,329],
    [507,296,308],[510,282,299],[517,296,308],[522,269,293],[528,249,273],[531,263,289],[539,241,256],[541,202,243],
    [548,198,214],[554,203,216],[557,204,219],[561,214,234],[564,183,209],[568,139,176],[572,125,149],[576,129,146],
    [577,139,166],[582,129,151],[586,99,123],[590,81,113],[594,63,93],[597,43,66],[599,23,46],[602,43,63],
    [605,46,59],[608,28,49],[612,24,43],[615,28,43]
];
var bars="";
var k=0;
for(var n=0;n<313;n++){
    var x=n*1.97;
    while(k<pts.length-2&&pts[k+1][0]<x){
        k++;
    }
    var a=pts[k],b=pts[k+1];
    var t=(x-a[0])/(b[0]-a[0]);
    var hi=a[1]+(b[1]-a[1])*t;
    var lo=a[2]+(b[2]-a[2])*t;
    if(Math.abs(x-a[0])<1){
        hi=a[1];
        lo=a[2];
    }else if(Math.abs(b[0]-x)<1){
        hi=b[1];
        lo=b[2];
    }else{
        hi+=(n*7%5-1)*2;
        lo+=(n*11%7-4)*1.5;
    }
    bars+="M"+x.toFixed(1)+" "+hi.toFixed(1)+"V"+lo.toFixed(1);
}
document.getElementById("bars-h4").setAttribute("d",bars);
```
